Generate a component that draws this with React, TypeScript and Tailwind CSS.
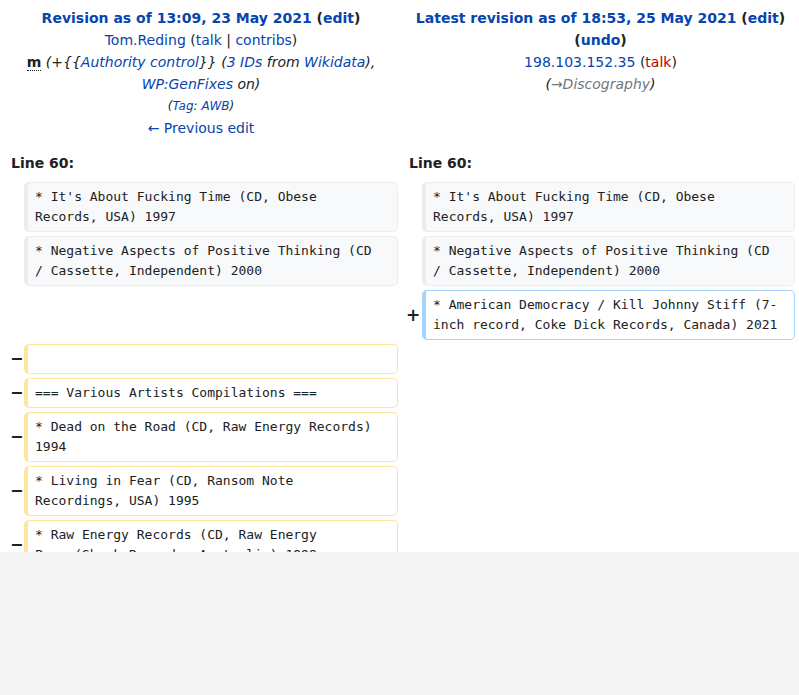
import React from "react";

const link = "text-[#0645ad]";

type Side = { kind: "ctx" | "del" | "add"; text: string } | null;

function Box({ kind, text }: { kind: "ctx" | "del" | "add"; text: string }) {
  const cls =
    kind === "ctx"
      ? "bg-[#f8f9fa] border-[#eaecf0]"
      : kind === "del"
      ? "bg-white border-[#ffe49c]"
      : "bg-white border-[#a3d3ff]";
  return (
    <div
      className={`${cls} border border-l-4 rounded-[5px] pl-[7px] pr-[12px] py-[4px] min-h-[30px] whitespace-pre-wrap break-words text-[13px] leading-[20px] text-[#202122]`}
      style={{ fontFamily: '"DejaVu Sans Mono", "Liberation Mono", monospace' }}
    >
      {text}
    </div>
  );
}

function Marker({ kind, right }: { kind: "del" | "add" | null; right?: boolean }) {
  return (
    <div className={`flex items-center ${right ? "pl-[8px]" : "pl-[10px]"}`}>
      {kind === "del" && <span className="font-bold text-[16px] leading-none">−</span>}
      {kind === "add" && <span className="font-bold text-[17px] leading-none">+</span>}
    </div>
  );
}

const rows: [Side, Side][] = [
  [
    { kind: "ctx", text: "* It's About Fucking Time (CD, Obese Records, USA) 1997" },
    { kind: "ctx", text: "* It's About Fucking Time (CD, Obese Records, USA) 1997" },
  ],
  [
    { kind: "ctx", text: "* Negative Aspects of Positive Thinking (CD / Cassette, Independent) 2000" },
    { kind: "ctx", text: "* Negative Aspects of Positive Thinking (CD / Cassette, Independent) 2000" },
  ],
  [null, { kind: "add", text: "* American Democracy / Kill Johnny Stiff (7-inch record, Coke Dick Records, Canada) 2021" }],
  [{ kind: "del", text: "" }, null],
  [{ kind: "del", text: "=== Various Artists Compilations ===" }, null],
  [{ kind: "del", text: "* Dead on the Road (CD, Raw Energy Records) 1994" }, null],
  [{ kind: "del", text: "* Living in Fear (CD, Ransom Note Recordings, USA) 1995" }, null],
  [{ kind: "del", text: "* Raw Energy Records (CD, Raw Energy Power(Shock Records, Australia) 1998" }, null],
];

export default function App() {
  return (
    <div className="h-[695px] w-[799px] bg-[#f5f5f5]">
      <div
        className="h-[552px] overflow-hidden bg-white text-[14px] text-[#202122]"
        style={{ fontFamily: '"DejaVu Sans", "Liberation Sans", sans-serif' }}
      >
        <div className="flex pt-[7px] leading-[22px]">
          <div className="w-[402px] text-center">
            <div className="font-bold">
              <span className={link}>Revision as of 13:09, 23 May 2021</span> (<span className={link}>edit</span>)
            </div>
            <div>
              <span className={link}>Tom.Reding</span> (<span className={link}>talk</span> |{" "}
              <span className={link}>contribs</span>)
            </div>
            <div>
              <abbr className="font-bold no-underline border-b border-dotted border-[#202122]">m</abbr>{" "}
              <span className="italic">
                (+{"{{"}
                <span className={link}>Authority control</span>
                {"}}"} (<span className={link}>3 IDs</span> from <span className={link}>Wikidata</span>),
              </span>
            </div>
            <div className="italic">
              <span className={link}>WP:GenFixes</span> on)
            </div>
            <div className="italic text-[12px]">
              (<span className={link}>Tag</span>: <span className={link}>AWB</span>)
            </div>
            <div>
              <span className={link}>← Previous edit</span>
            </div>
          </div>
          <div className="w-[397px] text-center">
            <div className="font-bold">
              <span className={link}>Latest revision as of 18:53, 25 May 2021</span> (<span className={link}>edit</span>)
            </div>
            <div className="font-bold">
              (<span className={link}>undo</span>)
            </div>
            <div>
              <span className={link}>198.103.152.35</span> (<span className="text-[#ba0000]">talk</span>)
            </div>
            <div className="italic">
              (<span className="text-[#72777d]">→Discography</span>)
            </div>
          </div>
        </div>

        <div className="mt-[13px] grid grid-cols-[24px_374px_24px_373px_4px] gap-y-1">
          <div className="col-span-2 pl-[11px] font-bold leading-[22px] mb-1">Line 60:</div>
          <div className="col-span-3 pl-[11px] font-bold leading-[22px] mb-1">Line 60:</div>
          {rows.map(([l, r], i) => (
            <React.Fragment key={i}>
              <Marker kind={l && l.kind === "del" ? "del" : null} />
              <div>{l && <Box kind={l.kind} text={l.text} />}</div>
              <Marker kind={r && r.kind === "add" ? "add" : null} right />
              <div>{r && <Box kind={r.kind} text={r.text} />}</div>
              <div />
            </React.Fragment>
          ))}
        </div>
      </div>
    </div>
  );
}
